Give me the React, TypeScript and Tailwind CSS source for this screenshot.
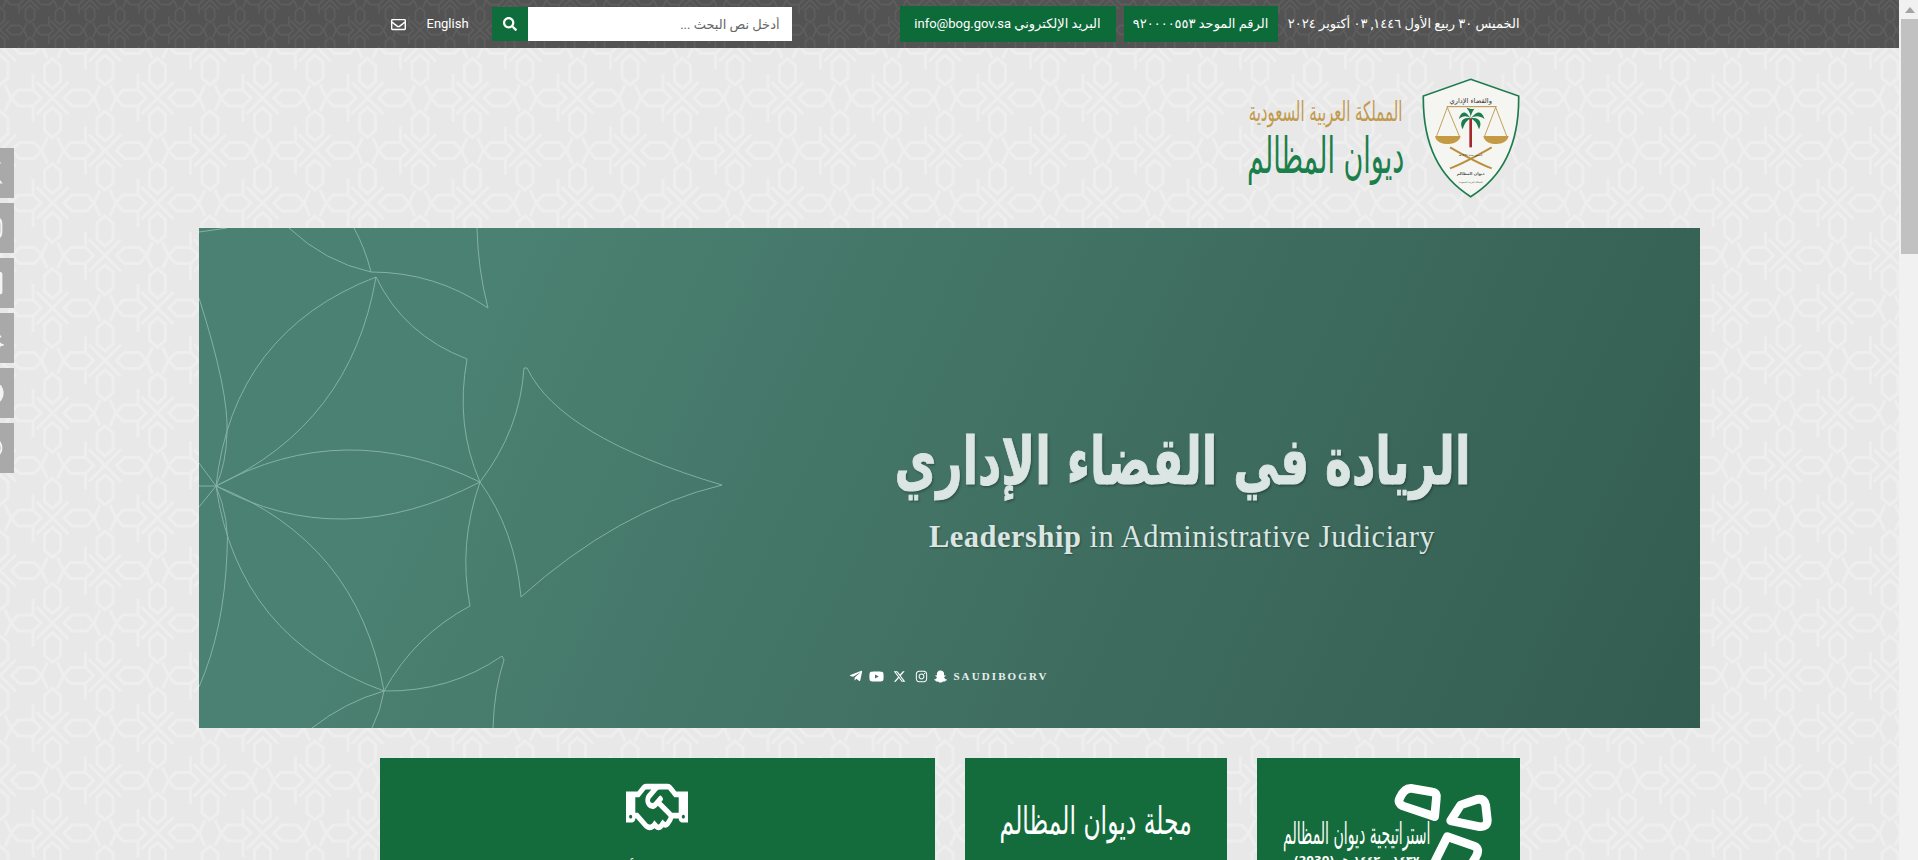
import React from "react";
import { FaRegHandshake, FaRegEnvelope, FaSearch, FaTelegramPlane, FaYoutube, FaInstagram, FaSnapchatGhost, FaWhatsapp, FaCircle, FaRegSquare } from "react-icons/fa";
import { FaXTwitter } from "react-icons/fa6";

function Tile({ id, line, bg, size, x = 0, y = 0 }: { id: string; line: string; bg: string; size: number; x?: number; y?: number }) {
  const star = (cx: number, cy: number, key: string) => (
    <g key={key} transform={`translate(${cx} ${cy})`}>
      <path d="M11 0L18 -8H33L41 0L33 8H18Z" />
      <path d="M-11 0L-18 -8H-33L-41 0L-33 8H-18Z" />
      <path d="M0 13L-8 20V36L0 43L8 36V20Z" />
      <path d="M0 -13L-8 -20V-36L0 -43L8 -36V-20Z" />
      <path d="M11 0L5 -13M11 0L5 13M-11 0L-5 -13M-11 0L-5 13" />
      <path d="M36.500 -16L68.500 16M68.500 -16L36.500 16" />
      <path d="M33 -8V-24M33 8V24" />
    </g>
  );
  return (
    <svg className="absolute inset-0 w-full h-full" aria-hidden="true">
      <defs>
        <pattern id={id} x={x} y={y} width={size} height={size} patternUnits="userSpaceOnUse" viewBox="0 0 105 105">
          <g fill="none" stroke={line} strokeWidth="3">
            {star(0, 0, "a")}
            {star(105, 0, "b")}
            {star(0, 105, "c")}
            {star(105, 105, "d")}
            {star(52.5, 52.5, "e")}
            {star(-52.5, 52.5, "f")}
            {star(52.5, -52.5, "g")}
          </g>
        </pattern>
      </defs>
      <rect width="100%" height="100%" fill={bg} />
      <rect width="100%" height="100%" fill={`url(#${id})`} />
    </svg>
  );
}

function Emblem() {
  return (
    <svg viewBox="577 54 292 360" className="w-[98px] h-[120px] shrink-0">
      <path d="M722 58L866 108C868 250 820 350 722 410C625 350 578 250 580 108Z" fill="#f5f5f1" stroke="#1d7c4e" strokeWidth="5" />
      <text x="722" y="128" textAnchor="middle" fontSize="20" fill="#333" fontFamily="DejaVu Sans">والقضاء الإداري</text>
      <path d="M650 140H800" stroke="#b98f3e" strokeWidth="3" />
      <path d="M652 142L620 228M652 142L688 228M797 142L764 228M797 142L830 228" stroke="#b98f3e" strokeWidth="2.500" fill="none" />
      <path d="M615 228H692C688 250 660 252 652 252C640 252 618 248 615 228Z" fill="#c49a45" />
      <path d="M760 228H836C832 250 805 252 797 252C785 252 763 248 760 228Z" fill="#c49a45" />
      <path d="M722 175V262" stroke="#a6272d" strokeWidth="8" />
      <path d="M722 175C700 140 690 165 686 178C700 165 712 168 722 175C690 170 690 195 698 208C705 185 715 180 722 175C750 140 760 165 764 178C748 165 732 168 722 175C755 170 755 195 747 208C740 185 730 180 722 175C722 155 712 148 710 143C722 147 735 150 734 143C732 150 722 160 722 175Z" fill="#1d7c4e" />
      <path d="M660 325C700 310 745 285 785 262" stroke="#b98f3e" strokeWidth="6" fill="none" />
      <path d="M785 325C745 310 700 285 660 262" stroke="#b98f3e" strokeWidth="6" fill="none" />
      <text x="722" y="288" textAnchor="middle" fontSize="9" fill="#333" fontFamily="DejaVu Sans">تأسس سنة ١٣٧٤هـ</text>
      <text x="722" y="345" textAnchor="middle" fontSize="12" fontWeight="700" fill="#555" fontFamily="DejaVu Sans">ديوان المظالم</text>
      <text x="722" y="368" textAnchor="middle" fontSize="7" fill="#555" fontFamily="DejaVu Sans">المملكة العربية السعودية</text>
    </svg>
  );
}

function LogoText() {
  return (
    <div className="w-[156px] flex flex-col items-center font-['DejaVu_Sans']">
      <div className="h-[30px] flex items-center justify-center">
        <span dir="rtl" className="shrink-0 text-[27px] leading-[30px] text-[#c19a4f] whitespace-nowrap scale-x-[0.555]">المملكة العربية السعودية</span>
      </div>
      <div className="h-[60px] -mt-[1px] flex items-center justify-center">
        <span dir="rtl" className="shrink-0 text-[50px] leading-[60px] text-[#1b7f4b] whitespace-nowrap scale-x-[0.54]">ديوان المظالم</span>
      </div>
    </div>
  );
}

function BannerLines() {
  return (
    <svg viewBox="199 228 1501 500" className="absolute inset-0 w-full h-full" aria-hidden="true">
      <g fill="none" stroke="#a9cfc3" strokeWidth="1" opacity="0.62">
        <path d="M216 486Q344 416 480 482Q341 554 216 486" />
        <path d="M216 486Q233 332 376 277Q351 424 216 486" />
        <path d="M216 486Q357 541 384 691Q238 638 216 486" />
        <path d="M199 298Q229 392 227 433Q226 465 216 486" />
        <path d="M216 486Q230 520 227 553Q224 630 199 687" />
        <path d="M376 277Q404 335 467 359Q455 425 480 482Q515 530 521 597" />
        <path d="M527 368Q560 437 722 485Q618 510 521 597" />
        <path d="M527 368H524Q520 430 480 482Q458 545 470 606Q415 635 384 691" />
        <path d="M384 691Q450 692 502 656L504 660Q494 690 493 728" />
        <path d="M371 272Q435 272 488 308Q478 270 477 228" />
        <path d="M371 272Q365 248 354 228M371 272Q325 262 289 228M384 691Q345 702 312 728M384 691Q381 710 372 728" />
        <path d="M199 232L227 228M216 486L199 463M216 486H199M216 486L199 507" />
      </g>
    </svg>
  );
}

const tabs = [FaXTwitter, FaInstagram, FaRegSquare, FaSnapchatGhost, FaCircle, FaWhatsapp];

function Petals() {
  return (
    <svg viewBox="-36 -36 786 330" className="absolute top-0 left-0 w-[262px] h-[110px]" aria-hidden="true">
      <g fill="none" stroke="#fff" strokeWidth="26" strokeLinejoin="round">
        <path d="M425 55L490 66Q505 68 502 85L497 140L402 108Q385 100 392 85Q405 55 425 55Z" />
        <path d="M575 105L625 88Q645 85 650 105L655 150Q655 172 632 170L545 152Z" />
        <path d="M535 200L615 228Q635 236 620 262L590 310Q575 330 550 320L510 300Q490 290 500 270Z" />
      </g>
    </svg>
  );
}

export default function App() {
  return (
    <div className="flex h-[860px] w-[1918px] overflow-hidden font-[Roboto,'DejaVu_Sans',sans-serif]">
      <div className="relative w-[1899px] h-[860px] overflow-hidden">
        <Tile id="pg" line="#eeeeee" bg="#e8e8e8" size={105} y={-7} />

        <div className="relative">
          <header className="relative h-[48px] overflow-hidden">
            <Tile id="tb" line="#5d5d5d" bg="#535353" size={60} />
            <div dir="rtl" className="relative mx-auto w-[1140px] h-full flex items-center justify-between">
              <div className="flex items-center text-white text-[13px]">
                <span className="w-[232px] ml-[10px] whitespace-nowrap">الخميس ٣٠ ربيع الأول ١٤٤٦, ٠٣ أكتوبر ٢٠٢٤</span>
                <span className="h-[36px] w-[154px] ml-[8px] bg-[#0d6b3a] flex items-center justify-center whitespace-nowrap">الرقم الموحد ٩٢٠٠٠٠٥٥٣</span>
                <span className="h-[36px] w-[216px] bg-[#0d6b3a] flex items-center justify-center whitespace-nowrap">البريد الإلكتروني info@bog.gov.sa</span>
              </div>
              <div className="flex items-center text-white text-[13px] ml-[11px]">
                <input dir="rtl" placeholder="أدخل نص البحث ..." className="h-[34px] w-[264px] bg-white px-3 text-[13px] text-[#555] placeholder:text-[#666] outline-none" />
                <span className="h-[34px] w-[36px] bg-[#0f6c3b] flex items-center justify-center"><FaSearch className="w-[14px] h-[14px]" /></span>
                <span dir="ltr" className="mr-[23px] ml-[21px]">English</span>
                <FaRegEnvelope className="w-[15px] h-[15px]" />
              </div>
            </div>
          </header>

          <div dir="rtl" className="mx-auto w-[1140px] h-[180px] pt-[30px] flex items-start gap-[18px]">
            <Emblem />
            <div className="pt-[19px]"><LogoText /></div>
          </div>

          <section className="relative mx-auto w-[1501px] h-[500px] overflow-hidden bg-[linear-gradient(115deg,#4b8172_18%,#335c50_100%)]">
            <BannerLines />
            <div className="relative flex flex-col items-center w-[700px] ml-[633px] pt-[190px]">
              <h1 dir="rtl" className="shrink-0 text-[66px] leading-[88px] font-bold text-[#dbe6e3] whitespace-nowrap scale-x-[0.69] [-webkit-text-stroke:1px_#dbe6e3] [text-shadow:2px_2px_3px_rgba(0,0,0,0.3)] font-['DejaVu_Sans']">الريادة في القضاء الإداري</h1>
              <p className="mt-[13px] text-[30.500px] leading-[36px] text-[#dbe6e3] whitespace-nowrap tracking-[0.5px] [text-shadow:1px_1px_2px_rgba(0,0,0,0.3)] font-['Liberation_Serif']"><b>Leadership</b> in Administrative Judiciary</p>
              <div className="mt-[113px] mr-[466px] flex items-center gap-[6px] text-white">
                <FaTelegramPlane className="w-[14px] h-[14px]" />
                <FaYoutube className="w-[15px] h-[15px]" />
                <FaXTwitter className="w-[13px] h-[13px] ml-[3px]" />
                <FaInstagram className="w-[13px] h-[13px] ml-[3px]" />
                <FaSnapchatGhost className="w-[13px] h-[13px]" />
                <span className="text-[11px] font-bold tracking-[2.1px] font-['Liberation_Serif'] text-[#e6eeeb]">SAUDIBOGRV</span>
              </div>
            </div>
          </section>

          <div dir="rtl" className="mx-auto w-[1140px] mt-[30px] grid grid-cols-4 gap-[30px]">
            <div className="relative h-[260px] bg-[#146c3c] font-['DejaVu_Sans'] text-white">
              <Petals />
              <div className="absolute top-[60px] right-[90px] w-[146px] h-[32px] flex items-center justify-center">
                <span dir="rtl" className="shrink-0 text-[30px] leading-[32px] whitespace-nowrap scale-x-[0.47]">استراتيجية ديوان المظالم</span>
              </div>
              <div className="absolute top-[96px] right-[90px] w-[146px] h-[14px] flex items-center justify-center">
                <span dir="rtl" className="shrink-0 text-[11px] font-bold leading-[14px] whitespace-nowrap">١٤٣٧ - ١٤٤٢ هـ (2030)</span>
              </div>
            </div>
            <div className="h-[260px] bg-[#146c3c] flex flex-col items-center pt-[38px] font-['DejaVu_Sans']">
              <div className="h-[50px] flex items-center justify-center">
                <span dir="rtl" className="shrink-0 text-[38px] leading-[50px] text-white whitespace-nowrap scale-x-[0.617]">مجلة ديوان المظالم</span>
              </div>
            </div>
            <div className="col-span-2 h-[260px] bg-[#146c3c] flex flex-col items-center text-white pt-[24px]">
              <FaRegHandshake className="w-[62px] h-[50px] scale-y-[1.25]" />
              <span className="mt-[24px] text-[17px] leading-[24px]">الشراكات والأنشطة</span>
            </div>
          </div>
        </div>

        <div className="absolute left-0 top-[148px] flex flex-col gap-[5px]">
          {tabs.map((Icon, i) => (
            <div key={i} className="w-[14px] h-[50px] bg-[#a9a9a9] overflow-hidden flex items-center justify-end">
              <Icon className="w-[26px] h-[26px] shrink-0 text-[#f4f4f4] mr-[10px]" />
            </div>
          ))}
        </div>
      </div>

      <div className="w-[19px] h-[860px] bg-[#f1f1f1] flex flex-col shrink-0">
        <div className="h-[19px] flex items-center justify-center pl-[2px]">
          <svg viewBox="0 0 10 6" className="w-[10px] h-[6px]"><path d="M5 0L10 6H0Z" fill="#a3a3a3" /></svg>
        </div>
        <div className="ml-[2px] h-[235px] bg-[#c1c1c1]" />
      </div>
    </div>
  );
}
